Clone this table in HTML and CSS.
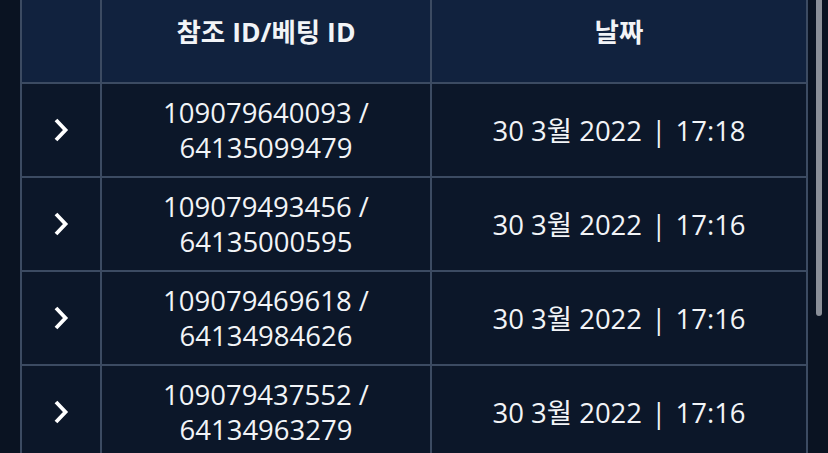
FILE: index.html
```html
<!DOCTYPE html>
<html lang="ko">
<head>
<meta charset="utf-8">
<link rel="stylesheet" href="styles.css">
</head>
<body>
<div class="page">
  <div class="main">
    <div class="table">
      <div class="cell head"></div>
      <div class="cell head">참조 ID/베팅 ID</div>
      <div class="cell head">날짜</div>

      <div class="cell arrow"><svg width="18" height="28" viewBox="0 0 18 28"><path d="M4 4 L13.5 14 L4 24" fill="none" stroke="#fff" stroke-width="3.8" stroke-linejoin="miter"/></svg></div>
      <div class="cell ids">109079640093 /<br>64135099479</div>
      <div class="cell date"><span>30 3월 2022 <span class="bar">|</span> 17:18</span></div>

      <div class="cell arrow"><svg width="18" height="28" viewBox="0 0 18 28"><path d="M4 4 L13.5 14 L4 24" fill="none" stroke="#fff" stroke-width="3.8" stroke-linejoin="miter"/></svg></div>
      <div class="cell ids">109079493456 /<br>64135000595</div>
      <div class="cell date"><span>30 3월 2022 <span class="bar">|</span> 17:16</span></div>

      <div class="cell arrow"><svg width="18" height="28" viewBox="0 0 18 28"><path d="M4 4 L13.5 14 L4 24" fill="none" stroke="#fff" stroke-width="3.8" stroke-linejoin="miter"/></svg></div>
      <div class="cell ids">109079469618 /<br>64134984626</div>
      <div class="cell date"><span>30 3월 2022 <span class="bar">|</span> 17:16</span></div>

      <div class="cell arrow"><svg width="18" height="28" viewBox="0 0 18 28"><path d="M4 4 L13.5 14 L4 24" fill="none" stroke="#fff" stroke-width="3.8" stroke-linejoin="miter"/></svg></div>
      <div class="cell ids">109079437552 /<br>64134963279</div>
      <div class="cell date"><span>30 3월 2022 <span class="bar">|</span> 17:16</span></div>
    </div>
  </div>
  <div class="scroll"><div class="thumb"></div></div>
</div>
</body>
</html>
```

FILE: styles.css
```css
html, body {
  margin: 0;
  padding: 0;
  height: 453px;
  overflow: hidden;
  background: #0a1322;
}
.page {
  display: flex;
  height: 453px;
  font-family: "Open Sans", "Noto Sans CJK KR", sans-serif;
  color: #f2f4f7;
}
.main {
  width: 788px;
  padding-left: 20px;
}
.table {
  display: grid;
  grid-template-columns: 78px 328px 374px;
  grid-template-rows: 82px repeat(4, 92px);
  gap: 2px;
  padding: 0 2px 2px 2px;
  background: #3c4b62;
}
.cell {
  background: #0c1729;
  display: flex;
  align-items: center;
  justify-content: center;
  text-align: center;
  font-size: 27.5px;
  line-height: 35px;
}
.bar {
  margin: 0 2px;
}
.head {
  background: #11223e;
  font-weight: 700;
  font-size: 26.5px;
  align-items: flex-start;
  padding-top: 15px;
}
.arrow svg {
  display: block;
}
.scroll {
  width: 20px;
  padding-left: 8px;
  box-sizing: border-box;
}
.thumb {
  width: 6px;
  height: 316px;
  background: #8a8f98;
  border-radius: 0 0 3px 3px;
}
```
